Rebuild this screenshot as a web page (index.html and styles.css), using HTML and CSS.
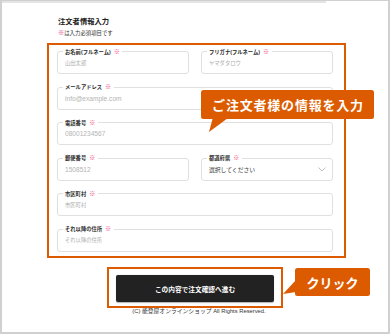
FILE: index.html
```html
<!DOCTYPE html>
<html lang="ja">
<head>
<meta charset="utf-8">
<link rel="stylesheet" href="styles.css">
</head>
<body>
<div class="frame">
  <div class="topline"></div>
  <section class="section">
    <h2 class="title">注文者情報入力</h2>
    <p class="note"><span class="req">※</span>は入力必須項目です</p>
    <div class="hl-form">
      <div class="grid">
        <div class="field"><span class="lbl">お名前(フルネーム)<span class="req">※</span></span><span class="ph jp">山田太郎</span></div>
        <div class="field"><span class="lbl">フリガナ(フルネーム)<span class="req">※</span></span><span class="ph jp">ヤマダタロウ</span></div>
        <div class="field wide"><span class="lbl">メールアドレス<span class="req">※</span></span><span class="ph">info@example.com</span></div>
        <div class="field wide"><span class="lbl">電話番号<span class="req">※</span></span><span class="ph">08001234567</span></div>
        <div class="field"><span class="lbl">郵便番号<span class="req">※</span></span><span class="ph">1508512</span></div>
        <div class="field select"><span class="lbl">都道府県<span class="req">※</span></span><span class="val">選択してください</span>
          <svg class="chev" width="8" height="5" viewBox="0 0 8 5"><polyline points="0.5,0.5 4,4 7.5,0.5" fill="none" stroke="#b0b0b0" stroke-width="0.8"/></svg>
        </div>
        <div class="field wide"><span class="lbl">市区町村<span class="req">※</span></span><span class="ph jp">市区町村</span></div>
        <div class="field wide"><span class="lbl">それ以降の住所<span class="req">※</span></span><span class="ph jp">それ以降の住所</span></div>
      </div>
    </div>
    <div class="hl-btn">
      <div class="btn">この内容で注文確認へ進む</div>
    </div>
    <p class="footer">(C) 能登屋オンラインショップ All Rights Reserved.</p>
  </section>
  <div class="callout callout-info">ご注文者様の情報を入力</div>
  <div class="callout callout-click">クリック</div>
</div>
</body>
</html>
```
FILE: styles.css
```css
* { box-sizing: border-box; }
html, body { margin: 0; padding: 0; background: #fff; }
body { font-family: "Liberation Sans", "Noto Sans CJK JP", sans-serif; color: #222; }

.frame {
  position: relative;
  width: 390px;
  height: 334px;
  border: 2px solid #d0d0d0;
  border-top-width: 1px;
  overflow: hidden;
}
.topline {
  width: 324px;
  height: 2px;
  background: #e4e4e4;
}
.section {
  padding-left: 45px;
}
.title {
  margin: 14px 0 0 11px;
  font-size: 7.3px;
  line-height: 9px;
  font-weight: bold;
  color: #222;
}
.note {
  margin: 3.5px 0 0 11px;
  font-size: 5.4px;
  line-height: 7px;
  color: #333;
}
.req { color: #ec3f7c; font-weight: bold; font-size: 1.15em; line-height: 1; }

.hl-form {
  margin-top: 6.5px;
  width: 299px;
  border: 2px solid #dc5b00;
  padding: 6px 11px 4px 8px;
}
.grid {
  display: grid;
  grid-template-columns: 132px 132px;
  column-gap: 12px;
  row-gap: 12.5px;
}
.field {
  position: relative;
  height: 23px;
  border: 1px solid #e0e0e0;
  border-radius: 3px;
  display: flex;
  align-items: center;
  padding: 0 7px;
}
.field.wide { grid-column: 1 / 3; }
.lbl {
  position: absolute;
  top: -3.5px;
  left: 4.5px;
  padding: 0 2.5px;
  background: #fff;
  font-size: 5.3px;
  line-height: 6px;
  font-weight: bold;
  color: #2a2a2a;
  white-space: nowrap;
}
.lbl .req { margin-left: 3px; }
.ph {
  font-size: 6.6px;
  color: #b4b4b4;
  white-space: nowrap;
}
.ph.jp { font-size: 5.3px; color: #adadad; }
.val {
  font-size: 5.8px;
  color: #333;
  white-space: nowrap;
}
.select { justify-content: space-between; padding-right: 6px; }
.chev { display: block; }

.hl-btn {
  width: 176px;
  margin: 9.5px 0 0 60px;
  border: 2px solid #dc5b00;
  padding: 6px 7px 4px;
}
.btn {
  height: 27px;
  background: #222;
  border-radius: 2px;
  display: flex;
  align-items: center;
  justify-content: center;
  color: #fff;
  font-size: 6.7px;
  font-weight: bold;
  box-shadow: 0 0.5px 1px rgba(0,0,0,0.3);
}
.footer {
  margin: 0;
  width: 300px;
  text-align: center;
  margin-left: 2px;
  font-size: 5.8px;
  line-height: 6px;
  color: #333;
  white-space: nowrap;
}

.callout {
  position: absolute;
  background: #dc5b00;
  color: #fff;
  font-family: "Noto Sans CJK JP", sans-serif;
  font-weight: bold;
  font-size: 13px;
  border-radius: 2.5px;
  display: flex;
  align-items: center;
  justify-content: center;
  white-space: nowrap;
}
.callout::after {
  content: "";
  position: absolute;
  background: #dc5b00;
}
.callout-info {
  left: 199px;
  top: 89px;
  width: 173px;
  height: 29px;
  letter-spacing: 0.8px;
  padding-left: 1px;
}
.callout-info::after {
  left: 8px;
  top: 28px;
  width: 19px;
  height: 14px;
  clip-path: polygon(20% 0, 100% 0, 0 100%);
}
.callout-click {
  left: 293px;
  top: 267px;
  width: 75px;
  height: 28px;
}
.callout-click::after {
  left: -12px;
  top: 12px;
  width: 13px;
  height: 14px;
  clip-path: polygon(100% 0, 100% 85%, 0 100%);
}
```
